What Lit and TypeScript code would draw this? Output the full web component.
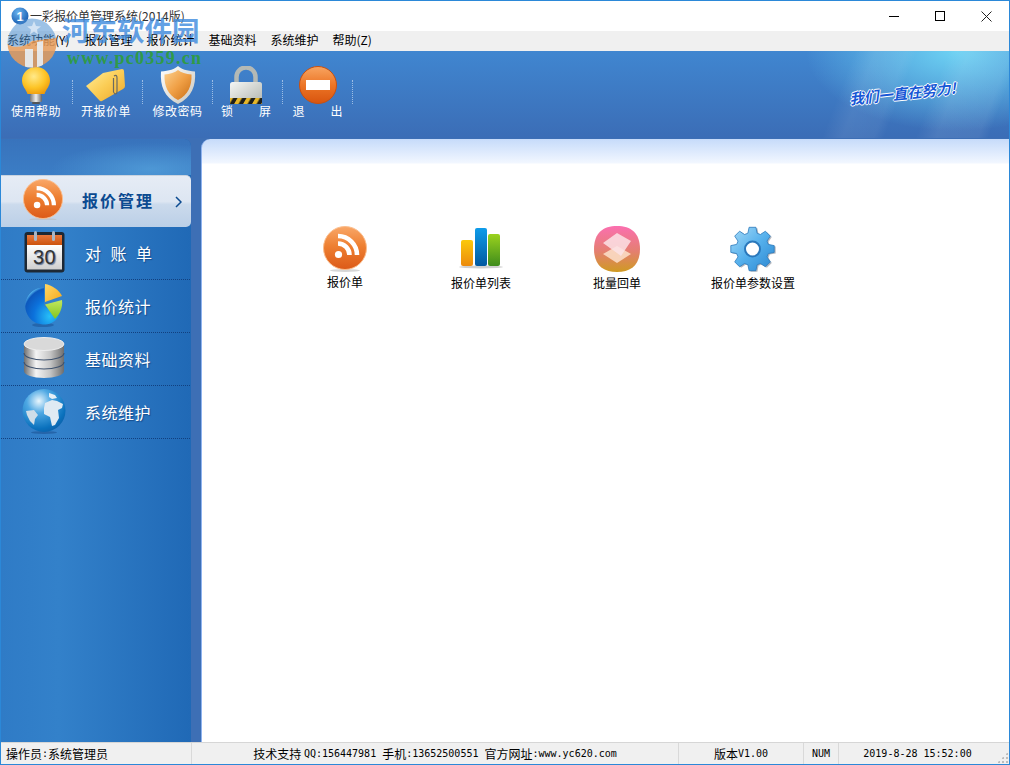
import { LitElement, html, css, svg } from 'lit';
import { customElement } from 'lit/decorators.js';

const rssIcon = (size: number) => html`
  <svg width=${size} height=${size * 46 / 44} viewBox="0 0 44 46">
    <defs>
      <linearGradient id="rssBall" x1="0" y1="0" x2="0" y2="1">
        <stop offset="0" stop-color="#f9a768" />
        <stop offset=".45" stop-color="#ee8032" />
        <stop offset="1" stop-color="#dc5a18" />
      </linearGradient>
    </defs>
    <ellipse cx="22" cy="44.5" rx="15" ry="1.5" fill="#bbb" opacity=".6" />
    <circle cx="22" cy="22" r="21.5" fill="url(#rssBall)" stroke="#fbbd8c" stroke-width="1" />
    <circle cx="15.5" cy="28.5" r="3.6" fill="#fff" />
    <path d="M15 17.5a11.5 11.5 0 0 1 11.5 11.5M15 10a19 19 0 0 1 19 19" fill="none" stroke="#fff" stroke-width="4.6" />
  </svg>
`;

const bulbIcon = html`
  <svg width="30" height="38" viewBox="0 0 30 38">
    <defs>
      <radialGradient id="bulbGlass" cx=".42" cy=".35" r=".7">
        <stop offset="0" stop-color="#ffe98a" />
        <stop offset=".6" stop-color="#fdc426" />
        <stop offset="1" stop-color="#ee9a0c" />
      </radialGradient>
      <linearGradient id="bulbBase" x1="0" x2="1" y1="0" y2="0">
        <stop offset="0" stop-color="#777" />
        <stop offset=".5" stop-color="#eee" />
        <stop offset="1" stop-color="#666" />
      </linearGradient>
    </defs>
    <path d="M15 1C7 1 1 7 1 14.5c0 6 4 8.500 5.500 13.500h17C25 23 29 20.500 29 14.500 29 7 23 1 15 1z" fill="url(#bulbGlass)" />
    <rect x="9" y="28" width="12" height="8" rx="1.500" fill="url(#bulbBase)" />
    <rect x="11" y="36" width="8" height="2" rx="1" fill="#555" />
  </svg>
`;

const tagIcon = html`
  <svg width="42" height="38" viewBox="0 0 42 38">
    <defs>
      <linearGradient id="tagFill" x1="0" y1="0" x2="1" y2="1">
        <stop offset="0" stop-color="#fff0a0" />
        <stop offset=".5" stop-color="#fbcd55" />
        <stop offset="1" stop-color="#eba62a" />
      </linearGradient>
    </defs>
    <path d="M1 20 18 7 37 3q2 0 2 2l1 15q0 2-2 3L17 35q-1.500.8-2.500-.5z" fill="url(#tagFill)" />
    <path d="M29 10q3-2 3 2v13q0 4-2.500 2.500-1.500-1-1-4V12" fill="none" stroke="#6b6a60" stroke-width="1.200" />
  </svg>
`;

const shieldIcon = html`
  <svg width="36" height="38" viewBox="0 0 36 38">
    <defs>
      <linearGradient id="shieldEdge" x1="0" x2="1" y1="0" y2="1">
        <stop offset="0" stop-color="#fff" />
        <stop offset="1" stop-color="#c9c6bd" />
      </linearGradient>
      <linearGradient id="shieldFill" x1="0" x2="1" y1="0" y2="1">
        <stop offset="0" stop-color="#fbd08e" />
        <stop offset=".5" stop-color="#f0a046" />
        <stop offset="1" stop-color="#c96d14" />
      </linearGradient>
    </defs>
    <path d="M18 0c3 3 9 5 17 5.500C36 20 32 31 18 38 4 31 0 20 1 5.500 9 5 15 3 18 0z" fill="url(#shieldEdge)" />
    <path d="M18 4c3 2.500 8 4 13.500 4.500C32 20 28 29 18 34 8 29 4 20 4.500 8.500 10 8 15 6.500 18 4z" fill="url(#shieldFill)" />
  </svg>
`;

const lockIcon = html`
  <svg width="34" height="38" viewBox="0 0 34 38">
    <defs>
      <linearGradient id="lockBody" x1="0" x2="1" y1="0" y2="1">
        <stop offset="0" stop-color="#f6f7f5" />
        <stop offset="1" stop-color="#b0b4ae" />
      </linearGradient>
      <pattern id="lockHazard" width="9" height="6" patternUnits="userSpaceOnUse" patternTransform="skewX(-30)">
        <rect width="9" height="6" fill="#1f1f1a" />
        <rect width="4.500" height="6" fill="#e4b62a" />
      </pattern>
    </defs>
    <path d="M7.500 17V11a9.500 9.500 0 0 1 19 0v6" fill="none" stroke="#b4b9b5" stroke-width="4.500" />
    <rect x="1" y="16" width="32" height="22" rx="2.500" fill="url(#lockBody)" />
    <rect x="1" y="32" width="32" height="6" fill="url(#lockHazard)" />
  </svg>
`;

const stopIcon = html`
  <svg width="38" height="38" viewBox="0 0 38 38">
    <defs>
      <linearGradient id="stopBall" x1="0" x2="0" y1="0" y2="1">
        <stop offset="0" stop-color="#f8a561" />
        <stop offset=".5" stop-color="#ec7526" />
        <stop offset="1" stop-color="#d8540e" />
      </linearGradient>
    </defs>
    <circle cx="19" cy="19" r="18.500" fill="url(#stopBall)" stroke="#c9500f" />
    <rect x="7" y="14" width="24" height="10" fill="#fff" />
  </svg>
`;

const calendarIcon = html`
  <svg width="41" height="42" viewBox="0 0 41 42">
    <defs>
      <linearGradient id="calHead" x1="0" x2="0" y1="0" y2="1">
        <stop offset="0" stop-color="#e8773c" />
        <stop offset="1" stop-color="#c94f08" />
      </linearGradient>
      <linearGradient id="calPage" x1="0" x2="0" y1="0" y2="1">
        <stop offset="0" stop-color="#fff" />
        <stop offset="1" stop-color="#cfcfcf" />
      </linearGradient>
    </defs>
    <rect x=".5" y="1" width="40" height="40.500" rx="3" fill="#1d2834" />
    <rect x="3" y="4" width="35" height="11" fill="url(#calHead)" />
    <rect x="3" y="14" width="35" height="24.500" fill="url(#calPage)" />
    <rect x="10" y="0" width="3" height="10" rx="1.500" fill="#a9b6c6" />
    <rect x="28" y="0" width="3" height="10" rx="1.500" fill="#a9b6c6" />
    <text x="20.500" y="33" text-anchor="middle" font-family="Liberation Sans, sans-serif" font-size="20" fill="#333">30</text>
  </svg>
`;

const pieIcon = html`
  <svg width="40" height="44" viewBox="0 0 40 44">
    <defs>
      <radialGradient id="pieBlue" cx=".72" cy=".78" r=".85">
        <stop offset="0" stop-color="#27c0f8" />
        <stop offset=".55" stop-color="#0c72dc" />
        <stop offset=".9" stop-color="#0d58bd" />
        <stop offset="1" stop-color="#5cc0f4" />
      </radialGradient>
      <linearGradient id="pieGold" x1="0" x2="1" y1="0" y2="1">
        <stop offset="0" stop-color="#ffd866" />
        <stop offset="1" stop-color="#f5a81c" />
      </linearGradient>
      <linearGradient id="pieGreen" x1="0" x2="0" y1="0" y2="1">
        <stop offset="0" stop-color="#c2e85e" />
        <stop offset="1" stop-color="#83c41f" />
      </linearGradient>
    </defs>
    <ellipse cx="19" cy="42" rx="11" ry="2" fill="#174a8a" opacity=".45" />
    <path d="M20 4.500a18.500 18.500 0 1 0 15 29L20 23z" fill="url(#pieBlue)" />
    <path d="M21 1c7 1 14 6 17 12L21 19z" fill="url(#pieGold)" />
    <path d="M21 21.500 38 17c1 7-2 14-7 19z" fill="url(#pieGreen)" />
  </svg>
`;

const dbIcon = html`
  <svg width="42" height="42" viewBox="0 0 42 42">
    <defs>
      <linearGradient id="dbMetal" x1="0" x2="1" y1="0" y2="0">
        <stop offset="0" stop-color="#6f6f6f" />
        <stop offset=".3" stop-color="#f4f4f4" />
        <stop offset=".65" stop-color="#c7c7c7" />
        <stop offset="1" stop-color="#6d6d6d" />
      </linearGradient>
    </defs>
    <path d="M1 7v27c0 4 9 7 20 7s20-3 20-7V7z" fill="url(#dbMetal)" />
    <path d="M1 16c0 4 9 7 20 7s20-3 20-7M1 25c0 4 9 7 20 7s20-3 20-7" fill="none" stroke="#40536e" stroke-width="1.200" />
    <ellipse cx="21" cy="7" rx="20" ry="6.500" fill="#d9d9d9" stroke="#eee" />
  </svg>
`;

const globeIcon = html`
  <svg width="46" height="46" viewBox="0 0 46 46">
    <defs>
      <radialGradient id="globeSea" cx=".38" cy=".28" r=".8">
        <stop offset="0" stop-color="#e9f6fd" />
        <stop offset=".35" stop-color="#4ea8e3" />
        <stop offset=".8" stop-color="#0a71bd" />
        <stop offset="1" stop-color="#0a5ca5" />
      </radialGradient>
    </defs>
    <ellipse cx="23" cy="44.500" rx="13" ry="1.500" fill="#174a8a" opacity=".5" />
    <circle cx="23" cy="22.500" r="21.500" fill="url(#globeSea)" />
    <path d="M24 15l7-3 5 1 6 3-1 4-4 2 1 8-4 7-3 1-2-9-6-3 0-6z" fill="#dfeaf3" />
    <path d="M5 23l8-1 4 5-3 4-1 6-4-4-3-6z" fill="#cfdde8" />
    <path d="M28 5l6 2 2 3-5 1-3-2z" fill="#e6eff6" />
  </svg>
`;

const barsIcon = html`
  <svg width="44" height="44" viewBox="0 0 44 44">
    <defs>
      <linearGradient id="barGold" x1="0" x2="0" y1="0" y2="1">
        <stop offset="0" stop-color="#fbc90c" />
        <stop offset="1" stop-color="#ec8a0c" />
      </linearGradient>
      <linearGradient id="barBlue" x1="0" x2="0" y1="0" y2="1">
        <stop offset="0" stop-color="#0e9cea" />
        <stop offset="1" stop-color="#0259a0" />
      </linearGradient>
      <linearGradient id="barGreen" x1="0" x2="0" y1="0" y2="1">
        <stop offset="0" stop-color="#9bd21e" />
        <stop offset="1" stop-color="#3f8c1c" />
      </linearGradient>
    </defs>
    <ellipse cx="22" cy="41" rx="22" ry="1.500" fill="#cfcfcf" />
    <rect x="2" y="14" width="12" height="26" rx="2" fill="url(#barGold)" />
    <rect x="16" y="2" width="12" height="38" rx="2" fill="url(#barBlue)" />
    <rect x="29" y="8" width="12" height="32" rx="2" fill="url(#barGreen)" />
  </svg>
`;

const batchIcon = html`
  <svg width="48" height="48" viewBox="0 1 48 48">
    <defs>
      <linearGradient id="batchBg" x1="0" x2="0" y1="0" y2="1">
        <stop offset="0" stop-color="#fb6fb0" />
        <stop offset=".55" stop-color="#e47f70" />
        <stop offset="1" stop-color="#cf9a22" />
      </linearGradient>
    </defs>
    <path d="M24 1C38 1 47 8 47 24S38 47 24 47 1 40 1 24 10 1 24 1z" fill="url(#batchBg)" />
    <path d="M10 29 24 21 38 29 24 38z" fill="#fbdcc4" opacity=".9" />
    <path d="M10 18 24 8 38 16 28 31 24 28z" fill="#fbe3e6" opacity=".85" />
  </svg>
`;

// cog outline built from the tooth count, so the 8 teeth stay even
const gearPath = (cx: number, cy: number, outer: number, inner: number, teeth: number) => {
  const step = (Math.PI * 2) / teeth;
  let d = '';
  for (let i = 0; i < teeth; i++) {
    const a = i * step - Math.PI / 2;
    const pts = [
      [inner, a - step * 0.36],
      [outer, a - step * 0.2],
      [outer, a + step * 0.2],
      [inner, a + step * 0.36],
    ];
    pts.forEach(([r, t], n) => {
      d += `${i === 0 && n === 0 ? 'M' : 'L'}${(cx + r * Math.cos(t)).toFixed(1)} ${(cy + r * Math.sin(t)).toFixed(1)}`;
    });
  }
  return d + 'z';
};

const gearIcon = html`
  <svg width="46" height="46" viewBox="0 0 46 46">
    <defs>
      <linearGradient id="gearFill" x1="0" x2="1" y1="0" y2="1">
        <stop offset="0" stop-color="#a9dcf8" />
        <stop offset=".5" stop-color="#55b0ec" />
        <stop offset="1" stop-color="#2a86d0" />
      </linearGradient>
    </defs>
    ${svg`<path d=${gearPath(24, 24, 22, 16.5, 8)} fill="#b5b9c0" />`}
    ${svg`<path d=${gearPath(22.5, 23, 22, 16.5, 8)} fill="url(#gearFill)" stroke="#2b78bb" stroke-width=".8" />`}
    <circle cx="22.500" cy="23" r="7.500" fill="#fff" stroke="#2b78bb" stroke-width="2" />
  </svg>
`;

const appLogo = html`
  <svg width="18" height="18" viewBox="0 0 18 18">
    <defs>
      <radialGradient id="appBall" cx=".4" cy=".3" r=".8">
        <stop offset="0" stop-color="#6ab5f0" />
        <stop offset="1" stop-color="#0c4fa8" />
      </radialGradient>
    </defs>
    <circle cx="9" cy="9" r="8.500" fill="url(#appBall)" />
    <text x="9" y="14" text-anchor="middle" font-family="Liberation Sans, sans-serif" font-weight="700" font-size="13" fill="#fff">1</text>
  </svg>
`;

const watermarkLogo = html`
  <svg width="50" height="50" viewBox="0 0 50 50">
    <defs>
      <clipPath id="wmDisc"><circle cx="25" cy="25" r="24.500" /></clipPath>
    </defs>
    <g clip-path="url(#wmDisc)">
      <path d="M0 0h50v20L25 23C18 29 8 31 0 26z" fill="#4d8fd2" opacity=".55" />
      <path d="M0 26c8 5 18 3 25-3l25-3v30H0z" fill="#e79c5a" opacity=".85" />
      <path d="M18 31h8v19h-8zM30 24l6-1v27h-6z" fill="#e8eef5" opacity=".9" />
      <path d="M27 3l2 5 5 .5-4 3 1 5-4-3-4 3 1-5-4-3 5-.5z" fill="#fff" opacity=".55" />
    </g>
  </svg>
`;

const TOOLS = [
  { icon: bulbIcon, label: '使用帮助', shift: true, split: false },
  { icon: tagIcon, label: '开报价单', shift: true, split: false },
  { icon: shieldIcon, label: '修改密码', shift: false, split: false },
  { icon: lockIcon, label: '锁 屏', shift: true, split: true },
  { icon: stopIcon, label: '退 出', shift: false, split: true },
];

const NAV = [
  { icon: calendarIcon, label: '对账单', wide: true },
  { icon: pieIcon, label: '报价统计', wide: false },
  { icon: dbIcon, label: '基础资料', wide: false },
  { icon: globeIcon, label: '系统维护', wide: false },
];

const TILES = [
  { icon: rssIcon(44), label: '报价单', first: true },
  { icon: barsIcon, label: '报价单列表', first: false },
  { icon: batchIcon, label: '批量回单', first: false },
  { icon: gearIcon, label: '报价单参数设置', first: false },
];

@customElement('app-root')
export class AppRoot extends LitElement {
  static styles = css`
    :host {
      display: flex;
      flex-direction: column;
      position: relative;
      box-sizing: border-box;
      width: 1010px;
      height: 765px;
      overflow: hidden;
      border: 1px solid #2b88d8;
      background: #fff;
      color: #000;
      font: 12px 'Noto Sans CJK SC', 'Liberation Sans', sans-serif;
    }

    svg {
      display: block;
    }

    .titlebar {
      display: flex;
      align-items: center;
      height: 30px;
      flex: none;
      padding-left: 10px;
      background: #fff;
      color: #333;
    }

    .titlebar .name {
      margin: 0 0 2px 1px;
      white-space: nowrap;
    }

    .winbtns {
      display: flex;
      margin-left: auto;
    }

    .winbtn {
      display: flex;
      align-items: center;
      justify-content: center;
      width: 46px;
      height: 30px;
    }

    .menubar {
      display: flex;
      align-items: center;
      gap: 14px;
      box-sizing: border-box;
      height: 20px;
      flex: none;
      padding: 0 0 3px 6px;
      background: #f0f0f0;
      white-space: nowrap;
    }

    .menubar .sys {
      margin-right: 1px;
    }

    .toolbar {
      display: flex;
      flex: none;
      height: 87px;
      padding-left: 2px;
      padding-right: 50px;
      box-sizing: border-box;
      background:
        linear-gradient(111deg, transparent 82%, rgba(255, 255, 255, 0.08) 84%, rgba(255, 255, 255, 0.06) 87%, transparent 88%),
        linear-gradient(111deg, transparent 91%, rgba(255, 255, 255, 0.09) 93%, rgba(255, 255, 255, 0.07) 97%, transparent 98%),
        radial-gradient(ellipse 150px 80px at 955px 0, rgba(112, 214, 245, 0.95), rgba(112, 214, 245, 0)),
        linear-gradient(#4086d0, #3b6db6);
    }

    .tool {
      display: flex;
      flex-direction: column;
      align-items: center;
      box-sizing: border-box;
      width: 69px;
      padding-top: 15px;
      color: #fff;
      white-space: nowrap;
    }

    .tool.shift {
      padding-right: 3px;
    }

    .tool-icon {
      display: flex;
      align-items: center;
      height: 38px;
    }

    .tool-label {
      display: flex;
      justify-content: center;
      width: 50px;
      line-height: 16px;
      margin-top: -1px;
      letter-spacing: 0.5px;
    }

    .tool-label.split {
      justify-content: space-between;
      letter-spacing: 0;
    }

    .sep {
      flex: none;
      align-self: flex-start;
      height: 24px;
      width: 0;
      margin-top: 29px;
      border-left: 1px dotted #9dbde4;
    }

    .slogan {
      margin-left: auto;
      align-self: center;
      margin-bottom: 4px;
      margin-right: 3px;
      color: #1757d6;
      font-size: 14.5px;
      font-weight: 700;
      font-style: italic;
      white-space: nowrap;
      transform: rotate(-6deg);
      text-shadow: 1px 0 #fff, -1px 0 #fff, 0 1px #fff, 0 -1px #fff;
    }

    .main {
      display: flex;
      flex: 1;
      min-height: 0;
      padding-top: 1px;
      background: #3d6fb5;
    }

    .side {
      flex: none;
      width: 190px;
      margin-right: 10px;
      border-top-right-radius: 7px;
      background: linear-gradient(90deg, #2f7bc6, #3381ca 30%, #2069b6);
    }

    .side-head {
      height: 36px;
      border-top-right-radius: 7px;
      background:
        radial-gradient(ellipse 100px 26px at 150px 30px, rgba(90, 170, 225, 0.6), transparent),
        linear-gradient(#3873bc, #3b7dc5);
    }

    .nav-active {
      display: flex;
      align-items: center;
      box-sizing: border-box;
      height: 52px;
      padding: 0 9px 4px 22px;
      border-radius: 0 5px 5px 0;
      border-top: 1px solid #c9d3df;
      background: linear-gradient(#e6ecf5, #dde6f2 50%, #cbdaec 56%, #bbcfe7);
      color: #0b4a90;
      font-size: 16px;
      font-weight: 700;
      letter-spacing: 2px;
    }

    .nav-active .text {
      margin-left: 19px;
    }

    .nav-active svg.chev {
      margin-left: auto;
      margin-top: 4px;
    }

    .nav-row {
      display: flex;
      align-items: center;
      box-sizing: border-box;
      height: 53px;
      padding: 0 0 2px 20px;
      color: #fff;
      font-size: 16px;
      letter-spacing: 0.5px;
      text-shadow: 1px 1px 1px rgba(10, 50, 110, 0.6);
      background: linear-gradient(90deg, #12407f 1px, transparent 1px) 2px 100% / 2px 1px repeat-x;
    }

    .nav-row .icon {
      display: flex;
      justify-content: center;
      width: 46px;
      margin-bottom: 2px;
    }

    .nav-row .text {
      margin-left: 18px;
    }

    .nav-row .text.wide {
      letter-spacing: 9.5px;
    }

    .content {
      flex: 1;
      box-sizing: border-box;
      border-left: 1px solid #8fb3ef;
      border-top-left-radius: 9px;
      padding: 87px 0 0 75px;
      background: linear-gradient(#c6dbfa, #f2f7ff 24px, #fff 25px);
    }

    .tiles {
      display: grid;
      grid-template-columns: repeat(4, 136px);
    }

    .tile {
      display: flex;
      flex-direction: column;
      align-items: center;
      white-space: nowrap;
    }

    .tile-icon {
      display: flex;
      justify-content: center;
      height: 48px;
    }

    .tile-label {
      margin-top: 1px;
      line-height: 16px;
    }

    .tile.first .tile-label {
      margin-top: 0;
    }

    .status {
      display: flex;
      flex: none;
      height: 22px;
      box-sizing: border-box;
      border-top: 1px solid #d6d6d6;
      background: #f0f0f0;
      white-space: nowrap;
    }

    .cell {
      display: flex;
      align-items: center;
      justify-content: center;
      box-sizing: border-box;
      border-right: 1px solid #d9d9d9;
    }

    .cell.op {
      justify-content: flex-start;
      width: 191px;
      padding-left: 5px;
    }

    .cell.info {
      width: 487px;
      white-space: pre;
    }

    .cell.ver {
      width: 125px;
    }

    .cell.num {
      width: 35px;
    }

    .cell.time {
      flex: 1;
      border-right: none;
      padding-right: 13px;
      position: relative;
    }

    .latin {
      font-family: 'DejaVu Sans Mono', 'Liberation Mono', monospace;
      font-size: 10px;
    }

    .grip {
      position: absolute;
      right: 1px;
      bottom: 1px;
      width: 11px;
      height: 11px;
      background: radial-gradient(circle, #bdbdbd 1px, transparent 1px) 0 0 / 4px 4px;
      clip-path: polygon(100% 0, 100% 100%, 0 100%);
    }

    .watermark {
      position: absolute;
      left: 6px;
      top: 17px;
      width: 200px;
      height: 50px;
      pointer-events: none;
    }

    .wm-name {
      position: absolute;
      left: 55px;
      top: -7px;
      color: rgba(64, 140, 222, 0.82);
      font-size: 27.5px;
      font-weight: 700;
      line-height: 36px;
      white-space: nowrap;
    }

    .wm-url {
      position: absolute;
      left: 60px;
      top: 31px;
      color: #2f9a48;
      font-family: 'Liberation Serif', serif;
      font-size: 18px;
      font-weight: 700;
      letter-spacing: 1.25px;
      line-height: 18px;
      white-space: nowrap;
    }
  `;

  render() {
    return html`
      <div class="titlebar">
        ${appLogo}
        <span class="name">一彩报价单管理系统(2014版)</span>
        <div class="winbtns">
          <div class="winbtn">
            <svg width="10" height="10" viewBox="0 0 10 10"><path d="M0 5.500h10" stroke="#000" /></svg>
          </div>
          <div class="winbtn">
            <svg width="10" height="10" viewBox="0 0 10 10"><rect x=".5" y=".5" width="9" height="9" fill="none" stroke="#000" /></svg>
          </div>
          <div class="winbtn">
            <svg width="11" height="11" viewBox="0 0 11 11"><path d="M.5.5l10 10M10.500.5l-10 10" stroke="#222" /></svg>
          </div>
        </div>
      </div>

      <div class="menubar">
        <span class="sys">系统功能(Y)</span>
        <span>报价管理</span>
        <span>报价统计</span>
        <span>基础资料</span>
        <span>系统维护</span>
        <span>帮助(Z)</span>
      </div>

      <div class="toolbar">
        ${TOOLS.map(t => html`
          <div class="tool ${t.shift ? 'shift' : ''}">
            <div class="tool-icon">${t.icon}</div>
            <div class="tool-label ${t.split ? 'split' : ''}">
              ${t.split ? t.label.split(' ').map(c => html`<span>${c}</span>`) : t.label}
            </div>
          </div>
          <div class="sep"></div>
        `)}
        <div class="slogan">我们一直在努力!</div>
      </div>

      <div class="main">
        <div class="side">
          <div class="side-head"></div>
          <div class="nav-active">
            ${rssIcon(40)}
            <span class="text">报价管理</span>
            <svg class="chev" width="7" height="12" viewBox="0 0 7 12">
              <path d="M1 1l5 5-5 5" fill="none" stroke="#0b4a90" stroke-width="1.500" />
            </svg>
          </div>
          ${NAV.map(n => html`
            <div class="nav-row">
              <div class="icon">${n.icon}</div>
              <span class="text ${n.wide ? 'wide' : ''}">${n.label}</span>
            </div>
          `)}
        </div>

        <div class="content">
          <div class="tiles">
            ${TILES.map(t => html`
              <div class="tile ${t.first ? 'first' : ''}">
                <div class="tile-icon">${t.icon}</div>
                <div class="tile-label">${t.label}</div>
              </div>
            `)}
          </div>
        </div>
      </div>

      <div class="status">
        <div class="cell op">操作员<span class="latin">:</span>系统管理员</div>
        <div class="cell info">技术支持 <span class="latin">QQ:156447981 </span>手机<span class="latin">:13652500551 </span>官方网址<span class="latin">:www.yc620.com</span></div>
        <div class="cell ver">版本<span class="latin">V1.00</span></div>
        <div class="cell num"><span class="latin">NUM</span></div>
        <div class="cell time">
          <span class="latin">2019-8-28 15:52:00</span>
          <div class="grip"></div>
        </div>
      </div>

      <div class="watermark">
        ${watermarkLogo}
        <div class="wm-name">河东软件园</div>
        <div class="wm-url">www.pc0359.cn</div>
      </div>
    `;
  }
}
